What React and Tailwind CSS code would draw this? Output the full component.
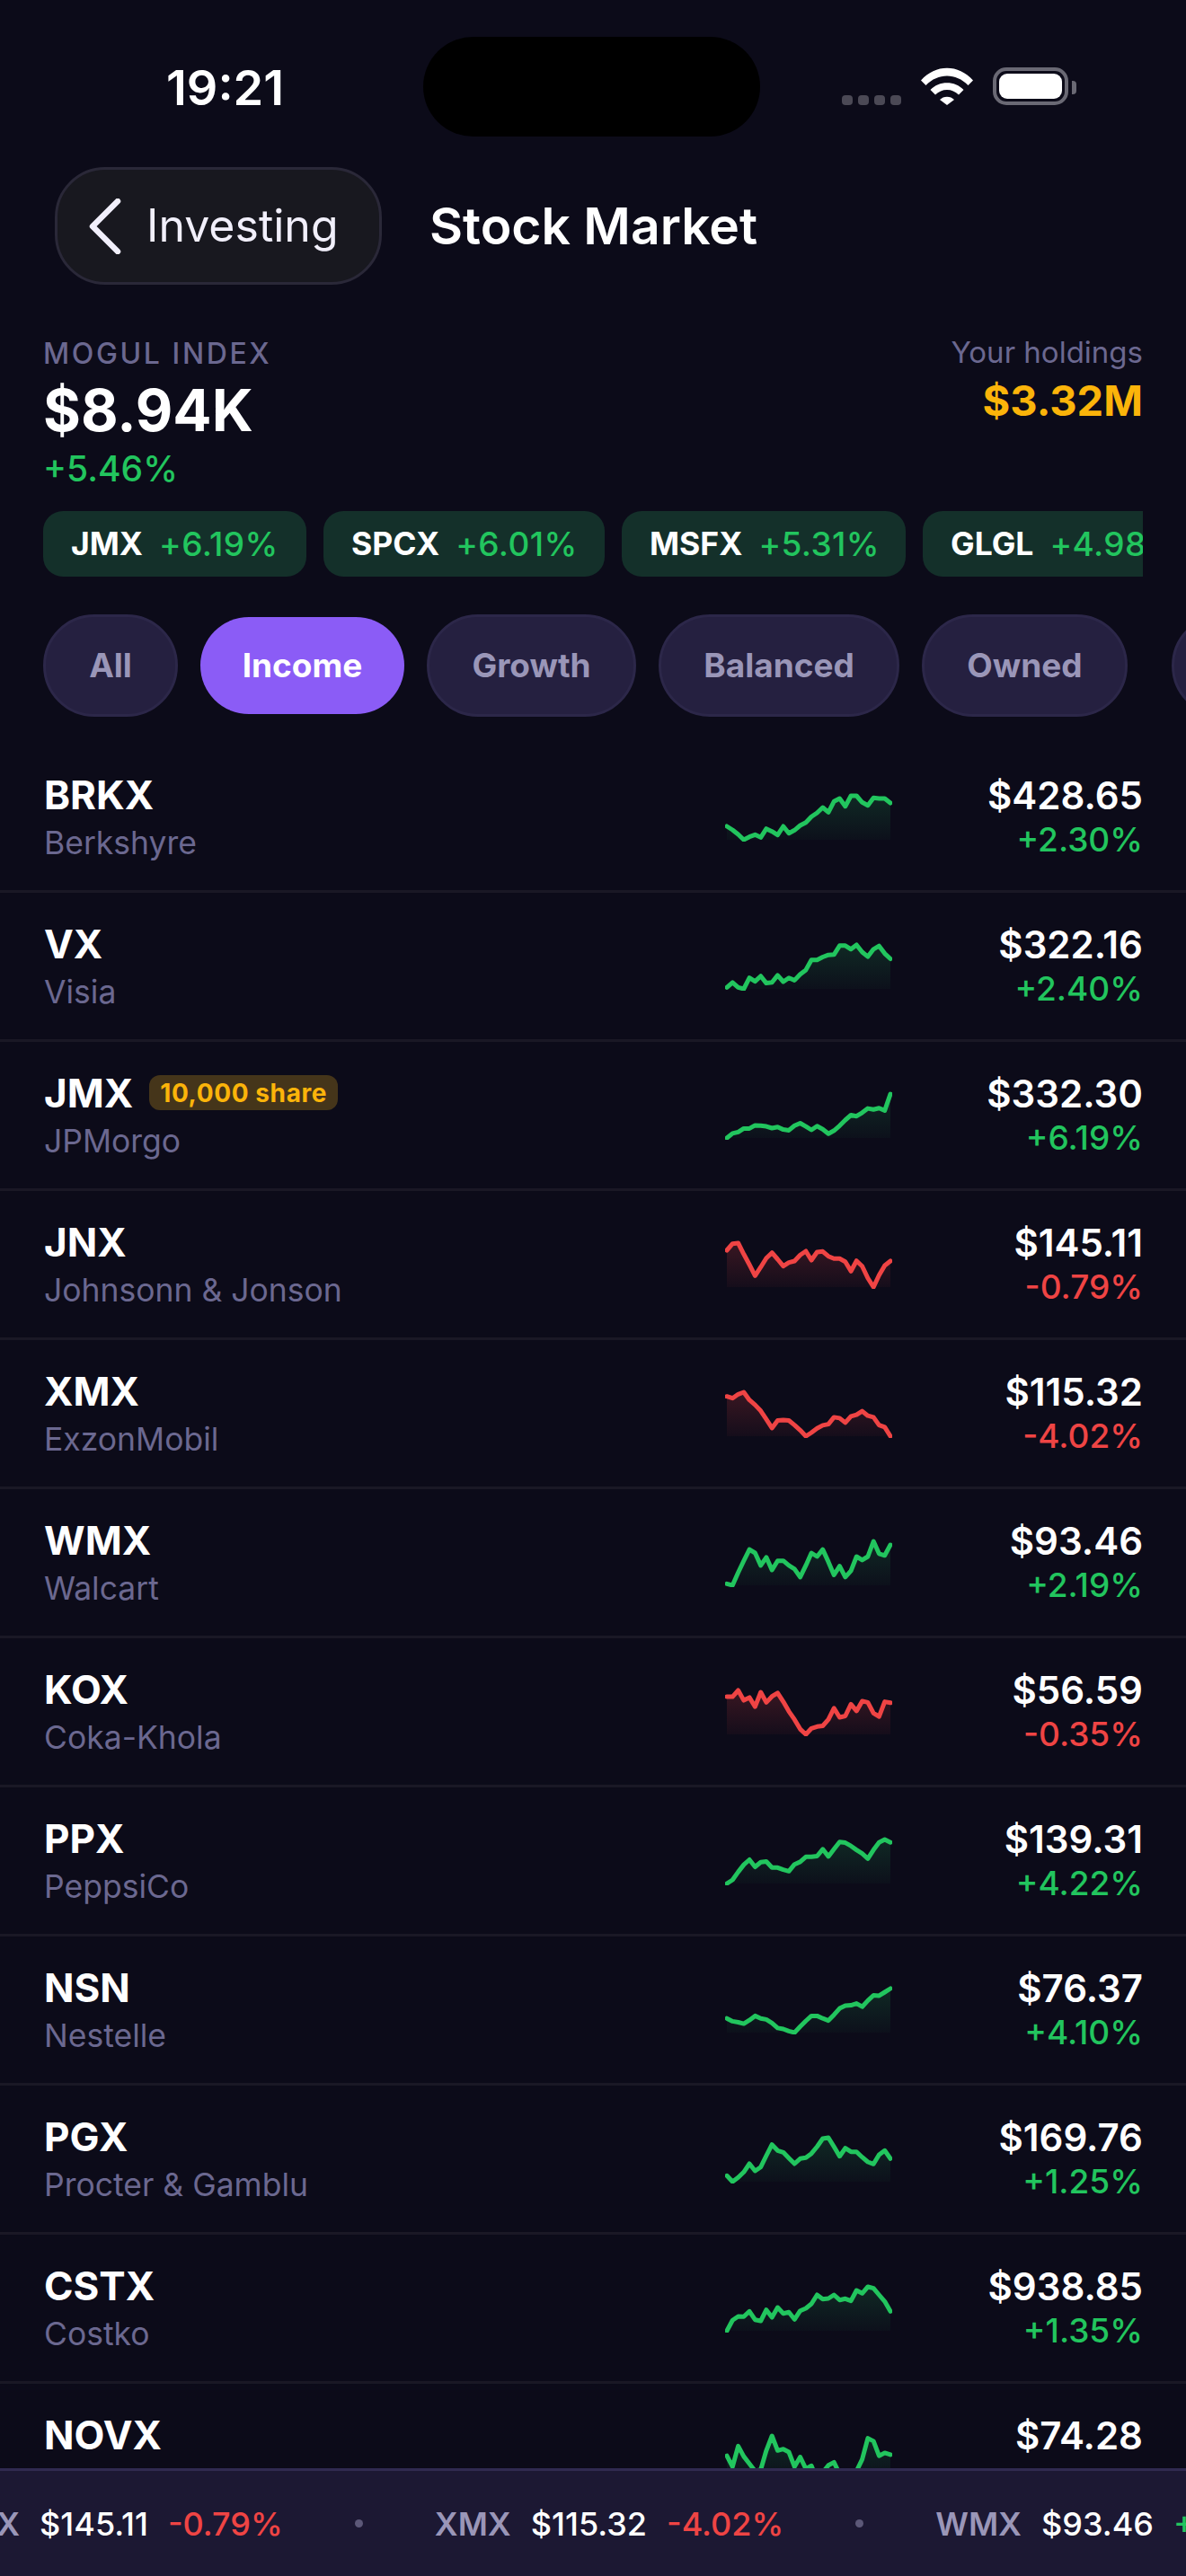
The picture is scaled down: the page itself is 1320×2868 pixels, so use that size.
const CHIPS = [
  { sym: 'JMX', pct: '+6.19%', w: 'w-[293px]' },
  { sym: 'SPCX', pct: '+6.01%', w: 'w-[313px]' },
  { sym: 'MSFX', pct: '+5.31%', w: 'w-[316px]' },
  { sym: 'GLGL', pct: '+4.98%', w: 'w-[316px]' },
];

const TABS = [
  { label: 'All', w: 'w-[150px]' },
  { label: 'Income', w: 'w-[227px]', active: true },
  { label: 'Growth', w: 'w-[233px]' },
  { label: 'Balanced', w: 'w-[268px]' },
  { label: 'Owned', w: 'w-[229px]' },
];

// Sparkline values, one per sample. Each chart scales itself to its own min/max.
const STOCKS = [
  { sym: 'BRKX', name: 'Berkshyre', price: '$428.65', pct: '+2.30%', data: [235, 247, 262, 280, 270, 263, 272, 243, 252, 264, 235, 258, 248, 232, 222, 203, 190, 172, 188, 152, 142, 168, 133, 133, 155, 165, 140, 142, 142, 157] },
  { sym: 'VX', name: 'Visia', price: '$322.16', pct: '+2.40%', data: [652, 638, 652, 656, 625, 635, 620, 640, 638, 618, 636, 625, 632, 615, 603, 575, 575, 567, 561, 560, 535, 535, 545, 533, 553, 566, 545, 536, 557, 572] },
  { sym: 'JMX', name: 'JPMorgo', price: '$332.30', pct: '+6.19%', badge: '10,000 share', data: [1075, 1062, 1058, 1048, 1048, 1039, 1040, 1042, 1047, 1044, 1051, 1053, 1040, 1033, 1042, 1052, 1041, 1050, 1063, 1054, 1040, 1024, 1010, 1013, 1003, 991, 994, 990, 997, 950] },
  { sym: 'JNX', name: 'Johnsonn & Jonson', price: '$145.11', pct: '-0.79%', data: [152, 130, 128, 165, 200, 237, 208, 178, 160, 182, 205, 193, 188, 168, 155, 185, 158, 156, 172, 180, 180, 190, 222, 187, 205, 245, 275, 235, 203, 188] },
  { sym: 'XMX', name: 'ExzonMobil', price: '$115.32', pct: '-4.02%', data: [640, 646, 633, 626, 652, 668, 688, 716, 745, 720, 718, 720, 735, 752, 772, 760, 746, 736, 732, 709, 712, 727, 706, 701, 689, 704, 709, 735, 742, 772] },
  { sym: 'WMX', name: 'Walcart', price: '$93.46', pct: '+2.19%', data: [257, 261, 225, 192, 160, 170, 205, 182, 218, 192, 192, 205, 215, 238, 205, 170, 180, 160, 195, 232, 207, 238, 220, 180, 190, 180, 137, 172, 177, 147] },
  { sym: 'KOX', name: 'Coka-Khola', price: '$56.59', pct: '-0.35%', data: [576, 576, 558, 586, 578, 604, 563, 592, 575, 565, 590, 617, 640, 667, 682, 665, 660, 658, 640, 608, 634, 630, 597, 616, 588, 592, 622, 632, 590, 593] },
  { sym: 'PPX', name: 'PeppsiCo', price: '$139.31', pct: '+4.22%', data: [1100, 1090, 1068, 1048, 1034, 1054, 1041, 1039, 1056, 1056, 1062, 1066, 1047, 1040, 1026, 1026, 1024, 1005, 1025, 1005, 985, 987, 996, 1007, 1017, 1031, 1007, 986, 978, 986] },
  { sym: 'NSN', name: 'Nestelle', price: '$76.37', pct: '+4.10%', data: [1480, 1488, 1491, 1495, 1485, 1473, 1480, 1483, 1493, 1507, 1510, 1516, 1520, 1503, 1487, 1473, 1473, 1480, 1486, 1470, 1452, 1444, 1443, 1438, 1447, 1430, 1415, 1416, 1406, 1396] },
  { sym: 'PGX', name: 'Procter & Gamblu', price: '$169.76', pct: '+1.25%', data: [362, 382, 368, 350, 322, 346, 333, 295, 258, 278, 284, 303, 322, 305, 302, 288, 265, 238, 235, 265, 297, 270, 282, 282, 300, 316, 323, 292, 278, 305] },
  { sym: 'CSTX', name: 'Costko', price: '$938.85', pct: '+1.35%', data: [250, 215, 202, 203, 185, 213, 217, 180, 205, 172, 192, 188, 212, 183, 175, 160, 130, 144, 142, 130, 147, 143, 150, 115, 125, 103, 108, 130, 152, 185] },
  // last row runs under the ticker, only its top line shows
  { sym: 'NOVX', name: '', price: '$74.28', pct: '', data: [218, 255, 185, 220, 245, 270, 265, 200, 150, 200, 195, 205, 255, 222, 262, 252, 300, 275, 250, 240, 280, 300, 285, 270, 230, 158, 168, 218, 208, 214] },
];

const TICKER = [
  { sym: 'JNX', price: '$145.11', pct: '-0.79%', up: false },
  { sym: 'XMX', price: '$115.32', pct: '-4.02%', up: false },
  { sym: 'WMX', price: '$93.46', pct: '+2.19%', up: true },
];

function Spark({ data, up }) {
  const w = 182;
  const h = 50;
  const min = Math.min(...data);
  const max = Math.max(...data);
  const pts = data.map((v, i) => [
    (i / (data.length - 1)) * w,
    1 + ((v - min) / (max - min)) * (h - 1),
  ]);
  const line = pts.map((p) => p[0].toFixed(1) + ',' + p[1].toFixed(1)).join(' ');
  const id = up ? 'fadeUp' : 'fadeDown';
  return (
    <svg width="186" height="54" viewBox="-2 -2 186 54" className="shrink-0">
      <polygon points={`0,${h} ${line} ${w},${h}`} fill={`url(#${id})`} />
      <polyline
        points={line}
        fill="none"
        stroke={up ? '#22c55e' : '#ef4444'}
        strokeWidth="5"
        strokeLinejoin="round"
        strokeLinecap="round"
      />
    </svg>
  );
}

function StatusBar() {
  return (
    <div className="h-[186px] shrink-0 flex items-start relative">
      <span className="absolute left-[185px] top-[69px] text-[54px] leading-[58px] font-semibold text-white">19:21</span>
      <div className="absolute left-[471px] top-[41px] w-[375px] h-[111px] rounded-full bg-black" />
      <div className="absolute left-[937px] top-[75px] w-[261px] h-[42px] flex items-end">
        <div className="flex gap-[6px]">
          {[0, 1, 2, 3].map((i) => (
            <span key={i} className="w-[12px] h-[11px] rounded-[4px] bg-[#4b4955]" />
          ))}
        </div>
        <svg width="58" height="42" viewBox="0 0 58 42" className="ml-[22px]">
          <path d="M0 14.5 C16 -4 42 -4 58 14.5 L52.5 20 C39 6 19 6 5.500 20 Z" fill="#fff" />
          <path d="M10.500 25 C20 14.500 38 14.500 47.500 25 L42 30.500 C35 23 23 23 16 30.500 Z" fill="#fff" />
          <path d="M21 36 C25 31.500 33 31.500 37 36 L29 42 Z" fill="#fff" />
        </svg>
        <div className="ml-[22px] w-[84px] h-[42px] rounded-[15px] border-[4px] border-[#6a6974] p-[3px] flex">
          <div className="flex-1 rounded-[9px] bg-white" />
        </div>
        <div className="ml-[4px] mb-[12px] w-[5px] h-[15px] rounded-r-[4px] bg-[#6a6974]" />
      </div>
    </div>
  );
}

function Header() {
  return (
    <div className="h-[131px] shrink-0 pl-[61px] flex items-center">
      <div className="w-[364px] h-[131px] rounded-[56px] bg-[#18181f] border-[3px] border-[#2a2838] flex items-center pl-[35px]">
        <svg width="36" height="62" viewBox="0 0 36 62" fill="none" className="shrink-0">
          <path d="M32 3 L4 31 L32 59" stroke="#f1effb" strokeWidth="6.500" strokeLinecap="round" strokeLinejoin="round" />
        </svg>
        <span className="ml-[28px] text-[50px] text-[#f1effb]">Investing</span>
      </div>
      <span className="ml-[53px] text-[57px] font-semibold text-white">Stock Market</span>
    </div>
  );
}

function Summary() {
  return (
    <div className="px-[48px] pt-[57px] shrink-0 flex justify-between items-start">
      <div className="flex flex-col">
        <span className="text-[32px] leading-[40px] font-medium tracking-[2.6px] text-[#6b6890]">MOGUL INDEX</span>
        <span className="mt-[6px] text-[64px] leading-[74px] font-bold text-white">$8.94K</span>
        <span className="mt-[6px] text-[39px] leading-[44px] font-medium text-[#22c55e]">+5.46%</span>
      </div>
      <div className="-mt-[2px] flex flex-col items-end">
        <span className="text-[33px] leading-[40px] text-[#6b6890]">Your holdings</span>
        <span className="mt-[5px] text-[47px] leading-[58px] font-bold text-[#fbb40a]">$3.32M</span>
      </div>
    </div>
  );
}

function Row({ stock }) {
  const up = stock.pct[0] !== '-';
  return (
    <div className="h-[166px] shrink-0 border-b-[3px] border-[#1a1825] pl-[49px] pr-[48px] flex items-center">
      <div className="flex-1 min-w-0 flex flex-col">
        <div className="flex items-center">
          <span className="text-[44px] leading-[54px] font-bold text-white">{stock.sym}</span>
          {stock.badge && (
            <span className="ml-[18px] h-[39px] px-[12px] rounded-[12px] bg-[#45351a] text-[#fbb40a] text-[28px] font-bold tracking-[0.6px] flex items-center">{stock.badge}</span>
          )}
        </div>
        <span className="mt-[4px] h-[46px] text-[35.500px] leading-[46px] text-[#6b6890]">{stock.name}</span>
      </div>
      <Spark data={stock.data} up={up} />
      <div className="w-[279px] shrink-0 flex flex-col items-end">
        <span className="text-[42px] leading-[50px] font-semibold text-white">{stock.price}</span>
        <span className={`h-[46px] mt-[1px] text-[37px] leading-[46px] font-medium ${up ? 'text-[#22c55e]' : 'text-[#ef4444]'}`}>{stock.pct}</span>
      </div>
    </div>
  );
}

export default function App() {
  return (
    <div className="w-[1320px] h-[2868px] overflow-hidden bg-[#0c0b19] flex flex-col font-['Inter',sans-serif]">
      <svg width="0" height="0" className="absolute">
        <defs>
          <linearGradient id="fadeUp" x1="0" y1="0" x2="0" y2="1">
            <stop offset="0" stopColor="#22c55e" stopOpacity="0.16" />
            <stop offset="1" stopColor="#22c55e" stopOpacity="0.03" />
          </linearGradient>
          <linearGradient id="fadeDown" x1="0" y1="0" x2="0" y2="1">
            <stop offset="0" stopColor="#ef4444" stopOpacity="0.2" />
            <stop offset="1" stopColor="#ef4444" stopOpacity="0.04" />
          </linearGradient>
        </defs>
      </svg>

      <StatusBar />
      <Header />
      <Summary />

      {/* top movers, cut off on the right */}
      <div className="mt-[25px] mx-[48px] shrink-0 flex gap-[19px] overflow-hidden">
        {CHIPS.map((c) => (
          <div key={c.sym} className={`${c.w} h-[73px] shrink-0 rounded-[22px] bg-[#14302a] flex items-center pl-[31px] gap-[18px]`}>
            <span className="text-[35.500px] font-bold text-white">{c.sym}</span>
            <span className="text-[37px] font-medium tracking-[0.4px] text-[#22c55e]">{c.pct}</span>
          </div>
        ))}
      </div>

      {/* category tabs */}
      <div className="mt-[42px] pl-[48px] shrink-0 flex items-center gap-[25px] overflow-hidden">
        {TABS.map((t) =>
          t.active ? (
            <div key={t.label} className={`${t.w} h-[108px] shrink-0 rounded-full bg-[#8b5cf6] text-white text-[37px] font-bold flex items-center justify-center`}>{t.label}</div>
          ) : (
            <div key={t.label} className={`${t.w} h-[114px] shrink-0 rounded-full bg-[#252040] border-[3px] border-[#2c2749] text-[#9a96b8] text-[37px] font-bold flex items-center justify-center`}>{t.label}</div>
          )
        )}
        <div className="ml-[24px] w-[200px] h-[114px] shrink-0 rounded-full bg-[#252040] border-[3px] border-[#2c2749]" />
      </div>

      <div className="mt-[30px] flex-1 min-h-0 overflow-hidden flex flex-col">
        {STOCKS.map((s) => (
          <Row key={s.sym} stock={s} />
        ))}
      </div>

      {/* running ticker */}
      <div className="h-[120px] shrink-0 border-t-[3px] border-[#302a50] bg-[#1c1833] flex items-center overflow-hidden whitespace-nowrap">
        <div className="flex items-center -ml-[52px]">
          {TICKER.map((t) => (
            <div key={t.sym} className="flex items-center text-[36px]">
              <span className="font-semibold text-[#9a96b8]">{t.sym}</span>
              <span className="ml-[22px] font-medium text-white">{t.price}</span>
              <span className={`ml-[22px] font-medium ${t.up ? 'text-[#22c55e]' : 'text-[#ef4444]'}`}>{t.pct}</span>
              <span className="mx-[80px] w-[9px] h-[9px] rounded-full bg-[#5c5878]" />
            </div>
          ))}
        </div>
      </div>
    </div>
  );
}
